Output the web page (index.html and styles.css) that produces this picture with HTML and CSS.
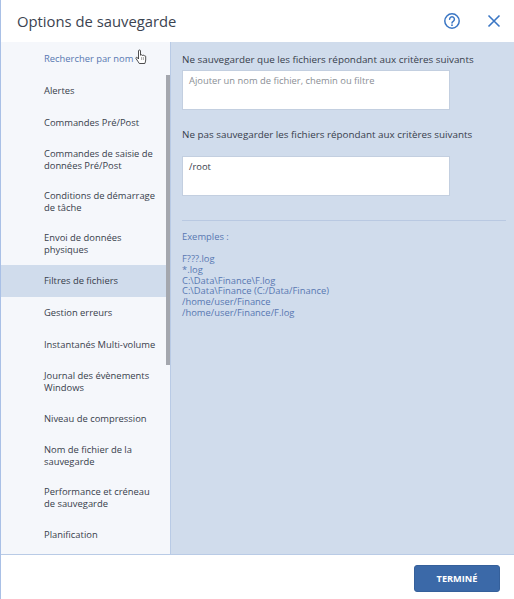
FILE: index.html
```html
<!DOCTYPE html>
<html lang="fr">
<head>
    <meta charset="UTF-8">
    <meta name="viewport" content="width=device-width, initial-scale=1.0">
    <title>Options de sauvegarde</title>
    <link rel="stylesheet" href="styles.css">
</head>
<body>
    <div class="dialog">
        <header class="dialog-header">
            <h1>Options de sauvegarde</h1>
            <div class="header-icons">
                <svg class="icon" width="18" height="18" viewBox="0 0 18 18" fill="none" stroke="#3a76c4" stroke-width="1.5">
                    <circle cx="9" cy="9" r="7.2"/>
                    <path d="M6.6 7.2a2.4 2.4 0 1 1 3.6 2.1c-.8.5-1.2.9-1.2 1.8" stroke-linecap="round"/>
                    <circle cx="9" cy="13.2" r="0.9" fill="#3a76c4" stroke="none"/>
                </svg>
                <svg class="icon" width="14" height="14" viewBox="0 0 14 14" fill="none" stroke="#3a76c4" stroke-width="1.6">
                    <path d="M1.5 1.5l11 11M12.5 1.5l-11 11"/>
                </svg>
            </div>
        </header>

        <div class="dialog-body">
            <nav class="sidebar">
                <ul class="menu">
                    <li class="search">Rechercher par nom</li>
                    <li>Alertes</li>
                    <li>Commandes Pré/Post</li>
                    <li>Commandes de saisie de données Pré/Post</li>
                    <li>Conditions de démarrage de tâche</li>
                    <li>Envoi de données physiques</li>
                    <li class="active">Filtres de fichiers</li>
                    <li>Gestion erreurs</li>
                    <li>Instantanés Multi-volume</li>
                    <li>Journal des évènements Windows</li>
                    <li>Niveau de compression</li>
                    <li>Nom de fichier de la sauvegarde</li>
                    <li>Performance et créneau de sauvegarde</li>
                    <li>Planification</li>
                </ul>
                <div class="scrollbar"></div>
            </nav>

            <main class="content">
                <label class="field-label">Ne sauvegarder que les fichiers répondant aux critères suivants</label>
                <div class="text-box placeholder">Ajouter un nom de fichier, chemin ou filtre</div>
                <label class="field-label second">Ne pas sauvegarder les fichiers répondant aux critères suivants</label>
                <div class="text-box">/root</div>
                <hr class="divider">
                <p class="examples-title">Exemples :</p>
                <ul class="examples">
                    <li>F???.log</li>
                    <li>*.log</li>
                    <li>C:\Data\Finance\F.log</li>
                    <li>C:\Data\Finance (C:/Data/Finance)</li>
                    <li>/home/user/Finance</li>
                    <li>/home/user/Finance/F.log</li>
                </ul>
            </main>
        </div>

        <footer class="dialog-footer">
            <button class="done-btn">TERMINÉ</button>
        </footer>

        <!-- Mouse pointer caught in the screenshot -->
        <svg class="hand-cursor" width="13" height="17" viewBox="0 0 13 17">
            <path d="M3.500 1.800c0-1.100 2-1.100 2 0V6.200c.6-.7 1.700-.5 1.900.3.600-.6 1.600-.4 1.800.4.600-.4 1.500-.1 1.500.7V11c0 1.600-.6 2.400-.9 3.500H4.300C3.600 13 2 11.300 1 9.600c-.5-1 .7-1.800 1.500-.9l1 1.300z" fill="#fff" stroke="#222" stroke-width="0.8" stroke-linejoin="round"/>
            <path d="M6.600 8v3M8.400 8v3" fill="none" stroke="#555" stroke-width="0.5"/>
        </svg>
    </div>
</body>
</html>
```

FILE: styles.css
```css
/* Basic styling */
html, body {
    margin: 0;
    padding: 0;
    height: 100%;
}

body {
    font-family: "Open Sans", "Liberation Sans", sans-serif;
    font-size: 9.4px;
    color: #38404c;
    background-color: #fff;
}

.dialog {
    position: relative;
    display: flex;
    flex-direction: column;
    width: 514px;
    height: 599px;
    box-sizing: border-box;
    border-left: 1px solid #a9c0e6;
    overflow: hidden;
}

/* Header */
.dialog-header {
    display: flex;
    align-items: center;
    justify-content: space-between;
    height: 42px;
    flex-shrink: 0;
    padding: 0 13px 0 16px;
    box-sizing: border-box;
}

.dialog-header h1 {
    margin: 0;
    font-size: 14.8px;
    font-weight: 400;
    color: #3b4350;
}

.header-icons {
    display: flex;
    align-items: center;
    gap: 26px;
}

.icon {
    display: block;
}

/* Body */
.dialog-body {
    display: flex;
    height: 512px;
    flex-shrink: 0;
    background-color: #d0dcec;
}

.sidebar {
    position: relative;
    width: 170px;
    flex-shrink: 0;
    box-sizing: border-box;
    padding-top: 1px;
    background-color: #f5f7fb;
    border-right: 1px solid #b9cbe6;
    overflow: hidden;
}

.menu {
    list-style: none;
    margin: 0;
    padding: 0;
}

.menu li {
    display: flex;
    align-items: center;
    min-height: 32px;
    box-sizing: border-box;
    padding: 9px 8px 9px 43px;
    line-height: 12px;
}

.menu .search {
    color: #5878b2;
}

.menu .active {
    background-color: #d0dcec;
}

.scrollbar {
    position: absolute;
    top: 33px;
    right: 0;
    width: 4px;
    height: 290px;
    background-color: #a4a7ae;
}

/* Right panel */
.content {
    flex: 1;
    padding: 11px 8px 0 11px;
}

.field-label {
    display: block;
    height: 12px;
    line-height: 12px;
    font-size: 9.85px;
}

.field-label.second {
    margin-top: 18px;
    margin-bottom: 16px;
}

.text-box {
    width: 268px;
    height: 40px;
    box-sizing: border-box;
    margin-top: 5px;
    padding: 0 6px;
    line-height: 19px;
    background-color: #fff;
    border: 1px solid #c3cfe0;
}

.field-label.second + .text-box {
    margin-top: 0;
}

.placeholder {
    color: #8b8f96;
}

.divider {
    height: 1px;
    margin: 24px 0 0;
    border: none;
    background-color: #b9c9e2;
}

.examples-title {
    margin: 10px 0 0;
    line-height: 12px;
    color: #5878b2;
}

.examples {
    list-style: none;
    margin: 11px 0 0;
    padding: 0;
    line-height: 10.8px;
    color: #5878b2;
}

/* Footer */
.dialog-footer {
    flex: 1;
    display: flex;
    justify-content: flex-end;
    align-items: flex-start;
    padding: 10px 14px 0 0;
    border-top: 1px solid #b9cbe6;
}

.done-btn {
    width: 86px;
    height: 27px;
    padding: 0;
    font-family: inherit;
    font-size: 9.2px;
    font-weight: 700;
    color: #fff;
    background-color: #3b69a8;
    border: 1px solid #35609b;
    border-radius: 3px;
}

.hand-cursor {
    position: absolute;
    left: 134px;
    top: 49px;
}
```
